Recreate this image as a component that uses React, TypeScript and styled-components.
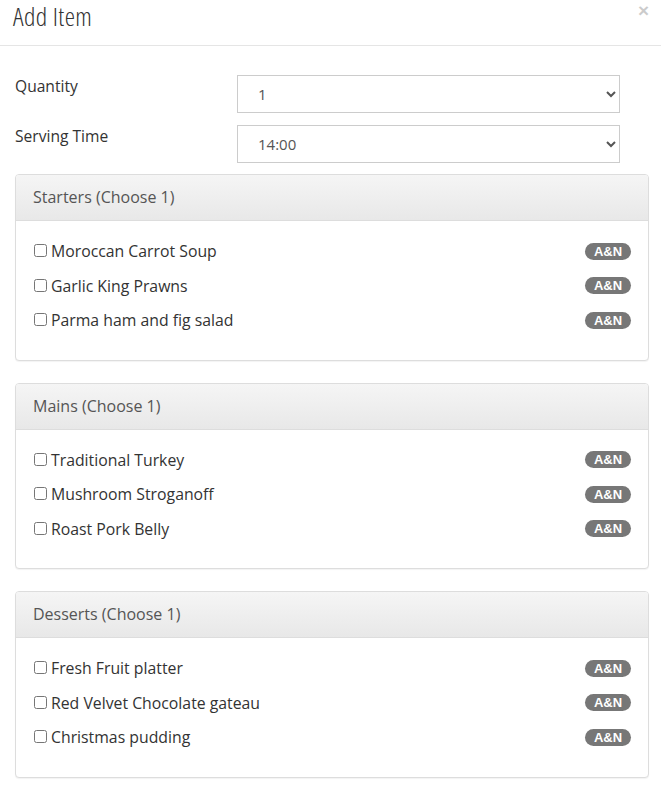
import React, { useState } from "react";
import styled, { createGlobalStyle } from "styled-components";

const GlobalStyle = createGlobalStyle`
  html, body {
    margin: 0;
    padding: 0;
    background: #fff;
  }
  body {
    font-family: "Open Sans", "Liberation Sans", Arial, sans-serif;
    color: #333;
  }
  * {
    box-sizing: border-box;
  }
`;

type Course = {
  title: string;
  items: string[];
};

const courses: Course[] = [
  {
    title: "Starters (Choose 1)",
    items: ["Moroccan Carrot Soup", "Garlic King Prawns", "Parma ham and fig salad"],
  },
  {
    title: "Mains (Choose 1)",
    items: ["Traditional Turkey", "Mushroom Stroganoff", "Roast Pork Belly"],
  },
  {
    title: "Desserts (Choose 1)",
    items: ["Fresh Fruit platter", "Red Velvet Chocolate gateau", "Christmas pudding"],
  },
];

const Modal = styled.div`
  width: 661px;
  background: #fff;
`;

const Header = styled.div`
  height: 46px;
  border-bottom: 1px solid #e5e5e5;
  display: flex;
  align-items: flex-start;
  justify-content: space-between;
  padding: 0 12px 0 13px;
`;

const Title = styled.h4`
  margin: 0;
  padding: 0 2px 0 0;
  font-size: 26px;
  font-weight: 300;
  font-stretch: 87.5%;
  letter-spacing: 0.4px;
  line-height: 34px;
  margin-top: -1px;
  color: #333;
`;

const Close = styled.button`
  border: 0;
  background: none;
  padding: 0;
  margin-top: 1px;
  font-family: "Liberation Sans", Arial, sans-serif;
  font-size: 19px;
  font-weight: bold;
  line-height: 19px;
  color: #000;
  opacity: 0.2;
  cursor: pointer;
`;

const Body = styled.div`
  padding: 29px 12px 15px 15px;
`;

const Form = styled.div`
  display: grid;
  row-gap: 12px;
  margin-bottom: 11px;
`;

const FormRow = styled.div`
  display: grid;
  grid-template-columns: 222px 383px;
  align-items: start;
`;

const Label = styled.label`
  font-size: 15.6px;
  line-height: 22px;
  color: #333;
`;

const Select = styled.select`
  height: 38px;
  width: 100%;
  border: 1px solid #ccc;
  border-radius: 0;
  background: #fff;
  padding: 0 10px 0 16px;
  font-family: "Open Sans", "Liberation Sans", Arial, sans-serif;
  font-size: 15px;
  color: #555;
`;

const Panel = styled.div`
  width: 634px;
  border: 1px solid #ddd;
  border-radius: 4px;
  box-shadow: 0 1px 1px rgba(0, 0, 0, 0.05);
  margin-bottom: 22px;
  background: #fff;
`;

const PanelHeading = styled.div`
  height: 46px;
  display: flex;
  align-items: center;
  padding: 0 17px 1px;
  font-size: 16px;
  line-height: 20px;
  color: #555;
  background: linear-gradient(to bottom, #f5f5f5 0%, #e8e8e8 100%);
  border-bottom: 1px solid #ddd;
  border-radius: 3px 3px 0 0;
`;

const PanelBody = styled.div`
  padding: 13px 17px 22px 18px;
`;

const ItemRow = styled.label`
  height: 34.5px;
  display: flex;
  align-items: center;
  justify-content: space-between;
  font-size: 15.8px;
  color: #333;
  cursor: pointer;
`;

const ItemName = styled.span`
  display: flex;
  align-items: center;
`;

const Check = styled.input`
  width: 13px;
  height: 13px;
  margin: 0 4px 1px 0;
`;

const Badge = styled.span`
  display: inline-block;
  min-width: 46px;
  height: 17px;
  padding: 0 6px;
  border-radius: 9px;
  background: #777;
  color: #fff;
  font-family: "Liberation Sans", Arial, sans-serif;
  font-size: 13px;
  font-weight: bold;
  line-height: 17px;
  text-align: center;
`;

const CoursePanel: React.FC<{ course: Course }> = ({ course }) => {
  const [picked, setPicked] = useState<Record<string, boolean>>({});
  return (
    <Panel>
      <PanelHeading>{course.title}</PanelHeading>
      <PanelBody>
        {course.items.map((item) => (
          <ItemRow key={item}>
            <ItemName>
              <Check
                type="checkbox"
                checked={!!picked[item]}
                onChange={() => setPicked({ ...picked, [item]: !picked[item] })}
              />
              {item}
            </ItemName>
            <Badge>A&amp;N</Badge>
          </ItemRow>
        ))}
      </PanelBody>
    </Panel>
  );
};

export default function App() {
  const [qty, setQty] = useState("1");
  const [time, setTime] = useState("14:00");

  return (
    <Modal>
      <GlobalStyle />
      <Header>
        <Title>Add Item</Title>
        <Close aria-label="Close">×</Close>
      </Header>
      <Body>
        <Form>
          <FormRow>
            <Label>Quantity</Label>
            <Select value={qty} onChange={(e) => setQty(e.target.value)}>
              {["1", "2", "3", "4", "5"].map((n) => (
                <option key={n}>{n}</option>
              ))}
            </Select>
          </FormRow>
          <FormRow>
            <Label>Serving Time</Label>
            <Select value={time} onChange={(e) => setTime(e.target.value)}>
              {["13:00", "13:30", "14:00", "14:30", "15:00"].map((t) => (
                <option key={t}>{t}</option>
              ))}
            </Select>
          </FormRow>
        </Form>
        {courses.map((c) => (
          <CoursePanel key={c.title} course={c} />
        ))}
      </Body>
    </Modal>
  );
}
